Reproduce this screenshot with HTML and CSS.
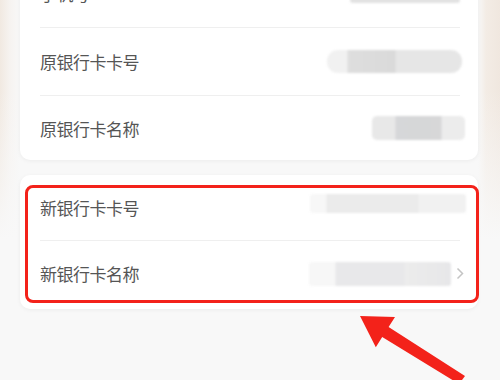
FILE: index.html
```html
<!DOCTYPE html>
<html lang="zh-CN">
<head>
    <meta charset="UTF-8">
    <meta name="viewport" content="width=device-width, initial-scale=1.0">
    <title>更换银行卡</title>
    <link rel="stylesheet" href="styles.css">
</head>
<body>
    <div class="page">
        <div class="card card-old">
            <div class="row">
                <span class="label">手机号</span>
                <span class="value value-phone"></span>
            </div>
            <div class="row">
                <span class="label">原银行卡卡号</span>
                <span class="value value-oldno"></span>
            </div>
            <div class="row row-last">
                <span class="label">原银行卡名称</span>
                <span class="value value-oldname"></span>
            </div>
        </div>

        <div class="card card-new">
            <span class="mark-box"></span>
            <div class="row">
                <span class="label">新银行卡卡号</span>
                <span class="value value-newno"></span>
            </div>
            <div class="row">
                <span class="label">新银行卡名称</span>
                <span class="value value-newname"></span>
                <span class="chevron">
                    <svg width="8" height="13" viewBox="0 0 8 13"><path d="M1.5 1.5 L6.5 6.5 L1.5 11.5" fill="none" stroke="#c4c4c4" stroke-width="1.5"/></svg>
                </span>
            </div>
        </div>

        <svg class="mark-arrow" width="150" height="80" viewBox="0 0 150 80">
            <polygon points="20,16 55,17 48.6,26.9 125,76 119,84 42.2,37.1 35.8,47.2" fill="#f3221a"/>
        </svg>
    </div>
</body>
</html>
```

FILE: styles.css
```css
html, body {
    margin: 0;
    height: 100%;
}
body {
    font-family: "Noto Sans CJK SC", "Noto Sans", sans-serif;
    background:
        linear-gradient(to bottom, rgba(248, 248, 248, 0) 0, rgba(248, 248, 248, 0) 90px, #f8f8f8 240px),
        linear-gradient(to right, #f1e9e1 0, #f6f3f0 10px, #f8f8f8 20px, #f8f8f8 478px, #f3ece5 486px, #f0e7df 500px);
    overflow: hidden;
}
.page {
    position: relative;
    display: flow-root;
    height: 380px;
    padding: 0 22px 0 20px;
    box-sizing: border-box;
}
.card {
    background: #fff;
    border-radius: 10px;
    box-shadow: 0 1px 4px rgba(0, 0, 0, 0.05);
    padding: 0 18px 0 20px;
}
.card-old {
    margin-top: -40px;
}
.card-new {
    position: relative;
    margin-top: 15px;
    padding-bottom: 3px;
}
.row {
    display: flex;
    align-items: center;
    height: 67px;
    border-top: 1px solid #efefef;
}
.row:first-of-type, .mark-box + .row {
    border-top: none;
}
.card-new .row {
    height: 65px;
}
.row-last {
    height: 64px;
}
.label {
    font-size: 17px;
    color: #555;
    letter-spacing: -0.5px;
}
.value {
    margin-left: auto;
    height: 23px;
    border-radius: 11px;
    filter: blur(1px);
}
.value-phone {
    width: 110px;
    height: 6px;
    margin-top: 13px;
    background: #e2e2e2;
}
.value-oldno {
    width: 135px;
    margin-right: -2px;
    background: linear-gradient(to right, #f1f1f1 0, #f1f1f1 20px, #dedede 21px, #dadada 68px, #e6e6e6 69px, #e6e6e6 100%);
}
.value-oldname {
    width: 93px;
    height: 24px;
    border-radius: 5px;
    margin-right: -5px;
    background: linear-gradient(to right, #e8e8e8 0, #e8e8e8 23px, #d6d7d9 24px, #d7d7d8 69px, #ececec 70px, #ececec 100%);
}
.value-newno {
    width: 156px;
    height: 19px;
    border-radius: 3px;
    margin-right: -6px;
    margin-top: -8px;
    background: linear-gradient(to right, #f7f7f7 0, #f7f7f7 16px, #ebebeb 17px, #ebebeb 108px, #f1f1f1 109px, #f1f1f1 100%);
}
.value-newname {
    width: 142px;
    height: 24px;
    border-radius: 3px;
    background: linear-gradient(to right, #f7f7f7 0, #f7f7f7 26px, #e8e8ea 27px, #e8e8ea 95px, #ececec 96px, #e7e7e9 100%);
}
.chevron {
    display: flex;
    margin-left: 5px;
    margin-right: -4px;
}
.mark-box {
    position: absolute;
    top: 10px;
    left: 5px;
    right: -1px;
    bottom: 6px;
    border: 3.5px solid #f3221a;
    border-radius: 8px;
    pointer-events: none;
}
.mark-arrow {
    position: absolute;
    left: 340px;
    top: 300px;
}
```
